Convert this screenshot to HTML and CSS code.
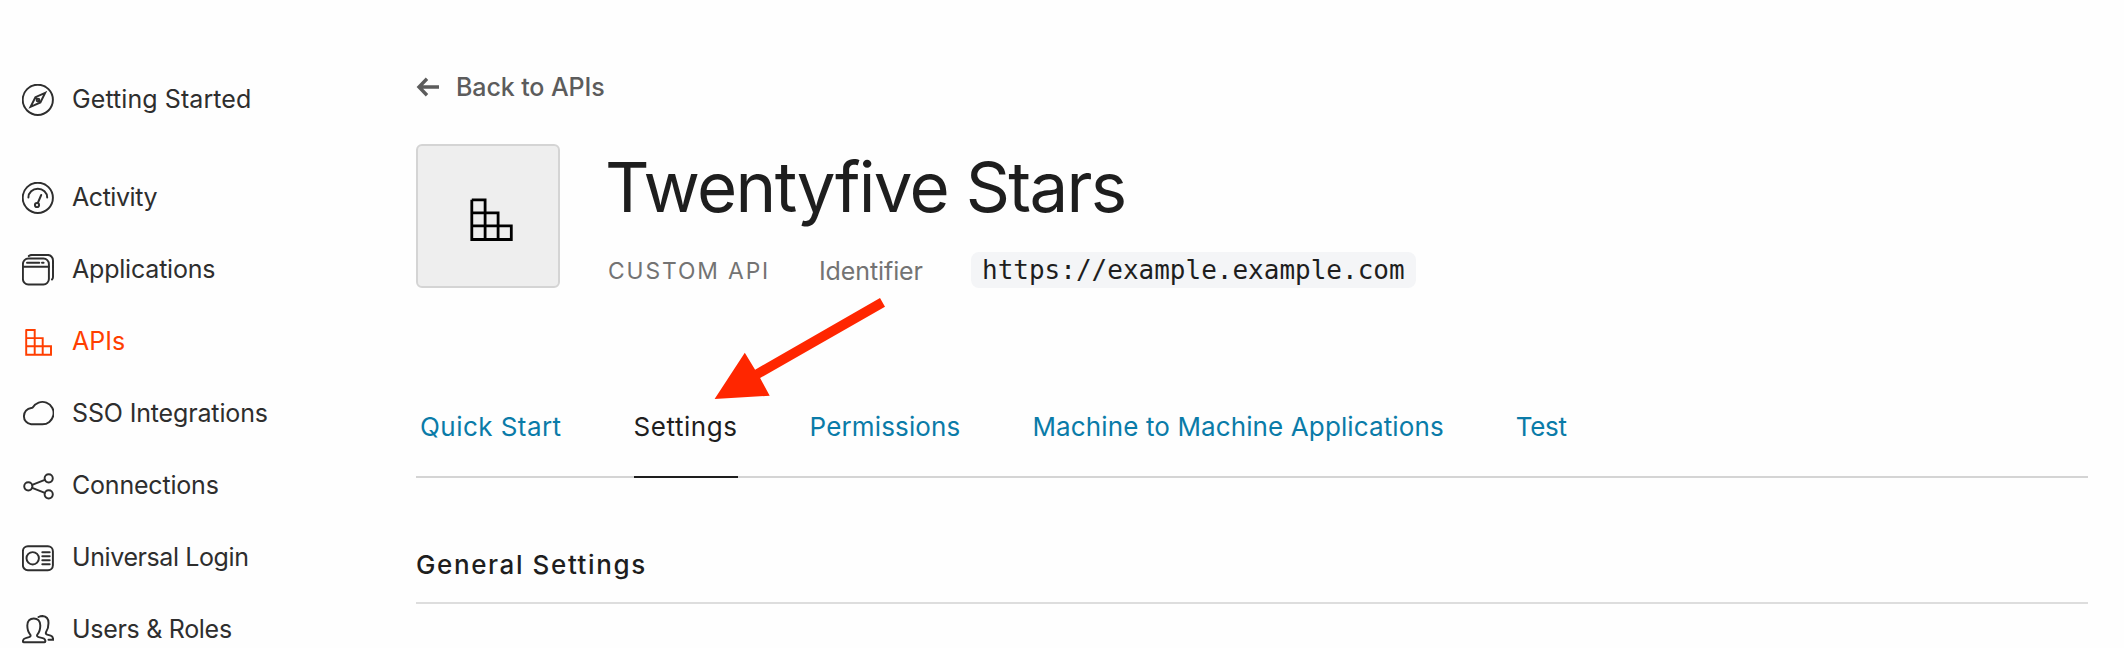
FILE: index.html
```
<!DOCTYPE html>
<html lang="en">
<head>
<meta charset="utf-8">
<title>Twentyfive Stars</title>
<link rel="stylesheet" href="styles.css">
</head>
<body>
<div class="layout">
  <nav class="sidebar">
    <a class="nav-item nav-first"><svg class="icon" viewBox="0 0 32 32"><circle cx="15.8" cy="15.8" r="15.1"/><path d="M23.2 8.8 13.4 13.2 8.6 22.8 18.4 18.4ZM13.8 13.6l1.3 1.3M18 18l-1.2-1.2"/><circle cx="16" cy="16" r="1.4"/></svg><span class="label l1">Getting Started</span></a>
    <a class="nav-item"><svg class="icon" viewBox="0 0 32 32"><circle cx="15.8" cy="15.8" r="15.1"/><path d="M6.4 15.5a9.4 8.8 0 0 1 18.8 0M19.2 13l-3.4 8"/><circle cx="15" cy="23" r="2.1"/></svg><span class="label l2">Activity</span></a>
    <a class="nav-item"><svg class="icon" viewBox="0 0 32 32"><rect x=".9" y="4.5" width="26" height="26" rx="5.5"/><path d="M.9 12.8h26M5 8.7h12.3M20 8.7h1.6M6.8 2Q8 .9 10 .9h15.500a5.500 5.500 0 0 1 5.500 5.500V23q0 1.500-1 2.500"/></svg><span class="label l3">Applications</span></a>
    <a class="nav-item active"><svg class="icon" viewBox="0 0 32 32"><path d="M4.200 4h8.500v24.700M4.200 4v24.700H29V20.300H4.200M4.200 12.100h16.500v16.600"/></svg><span class="label l4">APIs</span></a>
    <a class="nav-item"><svg class="icon" viewBox="0 0 32 32"><path d="M9.200 26.300a8.200 8.200 0 0 1 0-16.300q1 0 1.500-.5A11.200 11.200 0 1 1 20 26.300Z"/></svg><span class="label l5">SSO Integrations</span></a>
    <a class="nav-item"><svg class="icon" viewBox="0 0 32 32"><circle cx="6.300" cy="16.300" r="4.100"/><circle cx="26.700" cy="8.300" r="4.100"/><circle cx="26.700" cy="24.300" r="4.100"/><path d="M10.200 14.800 22.800 9.800M10.200 17.800 22.800 22.800"/></svg><span class="label l6">Connections</span></a>
    <a class="nav-item"><svg class="icon" viewBox="0 0 32 32"><rect x=".9" y="4.200" width="30" height="24" rx="5"/><circle cx="10.700" cy="16.300" r="6.200"/><path d="M20.300 10.300h7.400M20.300 14.300h7.400M20.300 18.300h7.400M20.300 22.300h7.400"/></svg><span class="label l7">Universal Login</span></a>
    <a class="nav-item"><svg class="icon" viewBox="0 0 32 32"><path d="M8.400 20.800C6.300 18.500 5.300 15 5.300 11.500 5.300 7 8 4.400 11.800 4.400s6.500 2.600 6.500 7.100c0 3.500-1 7-3.100 9.300-.5 1.200.2 2 1.500 2.300l4 1c2 .5 2.700 1.600 2.700 3.200 0 .7-.3 1-1 1H1.900c-.7 0-1-.3-1-1 0-1.600.7-2.700 2.700-3.200l3.500-1c1.300-.3 1.800-1.200 1.300-2.300ZM16.500 3Q18.500 2 20.500 2c4 .2 6 3.200 6 7 0 3.500-.8 6.500-2.300 8.700-.8 1.600-.3 2.500 1 2.900l3.500 1c1.800.6 2.500 1.900 2.400 4.200H26.500"/></svg><span class="label l8">Users &amp; Roles</span></a>
  </nav>
  <main class="main">
    <a class="back"><svg class="back-icon" viewBox="0 0 24 24"><path d="M23 12H3.500M11 3.800 3 12l8 8.200"/></svg><span class="back-label">Back to APIs</span></a>
    <header class="header">
      <div class="tile"><svg class="tile-icon" viewBox="0 0 140 140"><path d="M53.800 53.800h13.300v39.700M53.800 53.800v39.700h39.500V79.800H53.800M53.800 66.800h26.300v26.700"/></svg></div>
      <div class="heading">
        <h1 class="title">Twentyfive Stars</h1>
        <div class="meta"><span class="kind">CUSTOM API</span><span class="ident">Identifier</span><code class="code">https://example.example.com</code></div>
      </div>
    </header>
    <div class="tabs">
      <a class="tab t1">Quick Start</a><a class="tab t2 current">Settings</a><a class="tab t3">Permissions</a><a class="tab t4">Machine to Machine Applications</a><a class="tab t5">Test</a>
    </div>
    <h2 class="section">General Settings</h2>
  </main>
</div>
<svg class="pointer" viewBox="0 0 180 110"><path d="M4.600 101 34.800 54.700 45.100 71.700 170 0 175 8.700 50.100 80 59.700 97.700Z"/></svg>
</body>
</html>
```
FILE: styles.css
```
* { box-sizing: border-box; }
body { margin: 0; background: #fefefe; color: #1e1e1e; font-family: Inter, "Liberation Sans", sans-serif; position: relative; height: 648px; overflow: hidden; }
.layout { display: flex; height: 648px; overflow: hidden; }
.sidebar { width: 416px; flex: none; padding: 64px 0 0 22px; }
.nav-item { display: flex; align-items: center; gap: 18px; height: 72px; color: #2e2e2e; }
.nav-first { margin-bottom: 26px; }
.active { color: #ff3e00; }
.icon { width: 32px; height: 32px; flex: none; fill: none; stroke: currentColor; stroke-width: 1.95; stroke-linecap: round; }
.label { font-size: 25px; line-height: 30px; padding-bottom: 2px; white-space: nowrap; }
.l1 { letter-spacing: .08px; }
.l2 { letter-spacing: -.45px; }
.l3 { letter-spacing: -.2px; }
.l5 { letter-spacing: -.15px; }
.l6 { letter-spacing: -.2px; }
.l7 { letter-spacing: -.4px; }
.l8 { letter-spacing: -.3px; }
.main { flex: 1; margin-right: 36px; padding-top: 72px; min-width: 0; }
.back { display: flex; align-items: center; gap: 16px; height: 30px; color: #5c5c5c; }
.back-icon { width: 24px; height: 24px; flex: none; fill: none; stroke: currentColor; stroke-width: 3.4; margin-bottom: 1px; }
.back-label { font-size: 25px; line-height: 30px; font-weight: 500; letter-spacing: -.1px; }
.header { display: flex; gap: 48px; height: 144px; margin-top: 42px; }
.tile { width: 144px; height: 144px; flex: none; border: 2px solid #d4d4d4; border-radius: 6px; background: #eee; }
.tile-icon { display: block; width: 140px; height: 140px; fill: none; stroke: #000; stroke-width: 2.8; }
.title { margin: 8px 0 30px -3px; font-size: 69px; line-height: 70px; font-weight: 400; letter-spacing: -1.7px; white-space: nowrap; }
.meta { display: flex; align-items: center; height: 36px; color: #737373; white-space: nowrap; }
.kind { width: 211px; padding-top: 1px; font-size: 22.8px; letter-spacing: 1.9px; }
.ident { width: 152px; padding-top: 1px; font-size: 25px; letter-spacing: -.1px; }
.code { height: 36px; padding: 0 11px; border-radius: 8px; background: #f4f5f7; color: #1e1e1e; font: 26px/37px "DejaVu Sans Mono", monospace; }
.tabs { display: flex; gap: 72px; height: 66px; margin-top: 124px; border-bottom: 2px solid #d4d4d4; padding-left: 4px; }
.tab { height: 66px; font-size: 26px; line-height: 30px; color: #0a7ba8; white-space: nowrap; }
.t1 { letter-spacing: .45px; }
.t2 { letter-spacing: .55px; }
.t3 { letter-spacing: .15px; }
.t4 { letter-spacing: .12px; }
.t5 { letter-spacing: -.3px; }
.current { color: #1e1e1e; border-bottom: 2px solid #1e1e1e; }
.section { margin: 72px 0 0; height: 54px; border-bottom: 2px solid #ddd; font-size: 26px; line-height: 30px; font-weight: 500; letter-spacing: 1.6px; }
.pointer { position: absolute; left: 710px; top: 298px; width: 180px; height: 110px; fill: #ff2600; }
```
